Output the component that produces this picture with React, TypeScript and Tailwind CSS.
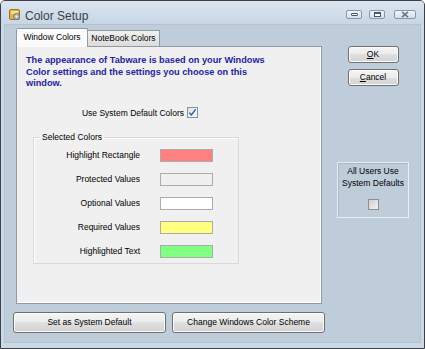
import React from "react";

const BTN =
  "flex items-center justify-center border border-[#707070] rounded-[3px] bg-[linear-gradient(to_bottom,#f4f4f4_0%,#ececec_50%,#dfdfdf_50%,#d3d3d3_100%)] shadow-[inset_0_0_0_1px_#fcfcfc] text-[8.5px] text-[#000]";

function CheckBox({ checked }: { checked?: boolean }) {
  return (
    <span
      className={`w-[11px] h-[11px] border border-[#8e8f8f] flex items-center justify-center ${
        checked ? "bg-[linear-gradient(135deg,#d9e3ee,#f6f9fc)]" : "bg-[linear-gradient(135deg,#cfcfcf,#f4f4f4)]"
      }`}
    >
      {checked && (
        <svg width="9" height="9" viewBox="0 0 9 9">
          <path d="M1.3 4.6 L3.4 7 L7.6 1.4" stroke="#2c5a9a" strokeWidth="1.4" fill="none" />
        </svg>
      )}
    </span>
  );
}

function CaptionButton({ wide, children }: { wide?: boolean; children: React.ReactNode }) {
  return (
    <div
      className={`${wide ? "w-[22px]" : "w-[16px]"} h-[9px] border border-[#8798ab] rounded-[2px] bg-[linear-gradient(to_bottom,#f1f5f9,#d3dde8)] flex items-center justify-center`}
    >
      {children}
    </div>
  );
}

const COLORS = [
  { label: "Highlight Rectangle", color: "bg-[#ff8080]" },
  { label: "Protected Values", color: "bg-[#f0f0f0]" },
  { label: "Optional Values", color: "bg-[#ffffff]" },
  { label: "Required Values", color: "bg-[#ffff80]" },
  { label: "Highlighted Text", color: "bg-[#80ff80]" },
];

export default function App() {
  return (
    <div className="w-[425px] h-[349px] font-['Liberation_Sans',Arial,sans-serif] bg-white">
      <div className="w-full h-full flex flex-col border border-[#3b4048] rounded-t-[5px] bg-[#cbd8e6] overflow-hidden">
        {/* Title bar */}
        <div className="h-[23px] shrink-0 flex items-center bg-[linear-gradient(to_bottom,#dae5f0,#c8d6e5)] pl-[8px] pr-[8px]">
          <svg width="12" height="11" viewBox="0 0 12 11" className="mt-[4px]">
            <rect x="0.5" y="0.5" width="10" height="10" rx="1.5" fill="#e3b53c" stroke="#9c7417" />
            <rect x="2" y="2" width="7" height="3" fill="#f6de8c" />
            <circle cx="7.5" cy="7.5" r="3" fill="#b8bcc2" stroke="#6f747b" />
            <circle cx="7.5" cy="7.5" r="1" fill="#eef0f2" />
          </svg>
          <span className="ml-[4px] mt-[6px] text-[12px] text-[#3a3f46]">Color Setup</span>
          <div className="ml-auto mt-[3px] flex items-center">
            <CaptionButton>
              <span className="w-[7px] h-[3px] border border-[#4b5665] rounded-[1px] bg-white" />
            </CaptionButton>
            <div className="w-[7px]" />
            <CaptionButton>
              <span className="w-[7px] h-[5px] border border-[#4b5665] border-t-2 bg-white" />
            </CaptionButton>
            <div className="w-[9px]" />
            <CaptionButton wide>
              <svg width="8" height="7" viewBox="0 0 8 7">
                <path d="M1 0.8 L7 6.2 M7 0.8 L1 6.2" stroke="#6c7888" strokeWidth="1.6" />
              </svg>
            </CaptionButton>
          </div>
        </div>

        {/* Body */}
        <div className="flex-1 mx-[3px] mb-[5px] bg-[#bfcddb] border border-[#b3c3d4] flex pl-[8px]">
          {/* Left column */}
          <div className="w-[312px] flex flex-col pt-[2px]">
            <div className="ml-[3px] h-[19px] flex items-end relative z-10">
              <div className="w-[72px] h-[19px] border border-b-0 border-[#8e9aa6] bg-[#fbfbfb] flex items-center justify-center text-[8.5px] text-[#000] rounded-t-[2px] translate-y-[1px] pb-[1px]">
                Window Colors
              </div>
              <div className="w-[72px] h-[16px] border border-b-0 border-l-0 border-[#8e9aa6] bg-[linear-gradient(to_bottom,#f0f0f0,#dcdcdc)] flex items-center justify-center text-[8.5px] text-[#000]">
                NoteBook Colors
              </div>
            </div>
            <div className="ml-[3px] w-[306px] h-[258px] border border-[#8e9aa6] bg-[#f0f0f0] shadow-[inset_-1px_-1px_0_#ffffff] pt-[8px]">
              <p className="pl-[9px] w-[262px] text-[9.2px] leading-[11.5px] font-bold text-[#24249b]">
                The appearance of Tabware is based on your Windows Color settings and the settings you choose on this
                window.
              </p>
              <div className="mt-[17px] flex items-center">
                <span className="w-[167px] text-right text-[8.5px] text-[#000]">Use System Default Colors</span>
                <span className="ml-[3px]">
                  <CheckBox checked />
                </span>
              </div>
              <div className="relative ml-[16px] mt-[18px] w-[206px] border border-[#d8d8d8] shadow-[inset_1px_1px_0_#ffffff] pt-[5px]">
                <span className="absolute left-[6px] top-[-7px] px-[2px] bg-[#f0f0f0] text-[8.5px] text-[#000] leading-[12px]">
                  Selected Colors
                </span>
                {COLORS.map((c) => (
                  <div key={c.label} className="h-[24px] flex items-center">
                    <span className="w-[106px] text-right text-[8.5px] text-[#000]">{c.label}</span>
                    <span className={`ml-[20px] w-[53px] h-[13px] border border-[#acacac] ${c.color}`} />
                  </div>
                ))}
              </div>
            </div>
            <div className="mt-[8px] flex gap-[6px]">
              <button className={`${BTN} w-[153px] h-[21px]`}>Set as System Default</button>
              <button className={`${BTN} w-[153px] h-[21px]`}>Change Windows Color Scheme</button>
            </div>
          </div>

          {/* Right column */}
          <div className="ml-[12px] w-[72px] flex flex-col items-center pt-[21px]">
            <button className={`${BTN} w-[51px] h-[17px]`}>
              <span className="underline">O</span>K
            </button>
            <button
              className={`${BTN} mt-[6px] w-[51px] h-[17px] border-[#3c7fb1] shadow-[inset_0_0_0_1px_#b9e3f8]`}
            >
              <span className="underline">C</span>ancel
            </button>
            <div className="mt-[76px] w-[72px] h-[56px] border border-[#e8eef4] shadow-[inset_1px_1px_0_#a9b9c9] flex flex-col items-center pt-[2px]">
              <span className="text-[8.5px] leading-[12px] text-[#000] text-center">
                All Users Use
                <br />
                System Defaults
              </span>
              <span className="mt-[10px]">
                <CheckBox />
              </span>
            </div>
          </div>
        </div>
      </div>
    </div>
  );
}
